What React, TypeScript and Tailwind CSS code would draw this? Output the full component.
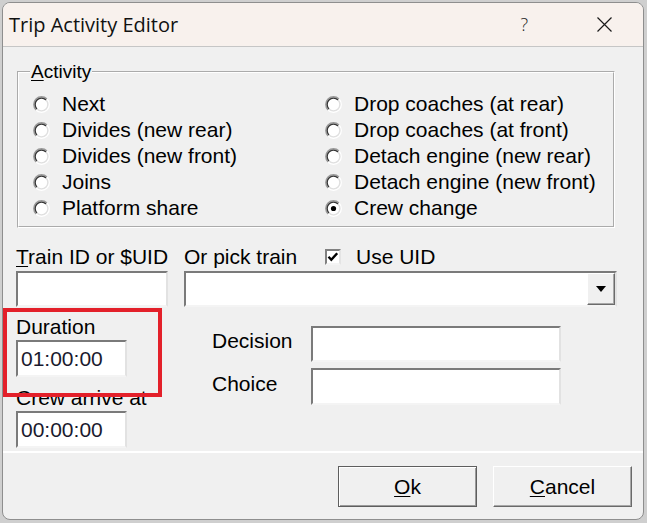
import React from "react";

const body = "font-['Liberation_Sans',Arial,sans-serif] text-[21px] leading-[26px] text-black";

function Radio({ checked = false }: { checked?: boolean }) {
  return (
    <svg width="17" height="17" viewBox="0 0 17 17" className="shrink-0">
      <circle cx="8.5" cy="8.5" r="6.5" fill="#fff" />
      <path d="M3.05 13.95 A7.7 7.7 0 0 1 13.95 3.05" fill="none" stroke="#9a9a9a" strokeWidth="1.4" />
      <path d="M13.95 3.05 A7.7 7.7 0 0 1 3.05 13.95" fill="none" stroke="#ffffff" strokeWidth="1.4" />
      <path d="M4 13 A6.3 6.3 0 0 1 13 4" fill="none" stroke="#383838" strokeWidth="1.4" />
      <path d="M13 4 A6.3 6.3 0 0 1 4 13" fill="none" stroke="#e0e0e0" strokeWidth="1.4" />
      {checked && <circle cx="8.5" cy="8.5" r="2.6" fill="#000" />}
    </svg>
  );
}

function Opt({ label, checked }: { label: string; checked?: boolean }) {
  return (
    <div className="flex h-[26px] items-center gap-[12px]">
      <Radio checked={checked} />
      <span className="whitespace-nowrap">{label}</span>
    </div>
  );
}

const sunken =
  "border-2 border-t-[#7a7a7a] border-l-[#7a7a7a] border-b-[#f4f4f4] border-r-[#e2e2e2] bg-white";

function Field({ w, h, value }: { w: string; h: string; value?: string }) {
  return (
    <div className={`${sunken} ${w} ${h} flex items-center pl-[3px]`}>
      {value && <span className="text-[#1a1a2e]">{value}</span>}
    </div>
  );
}

export default function App() {
  const left = ["Next", "Divides (new rear)", "Divides (new front)", "Joins", "Platform share"];
  const right = [
    "Drop coaches (at rear)",
    "Drop coaches (at front)",
    "Detach engine (new rear)",
    "Detach engine (new front)",
    "Crew change",
  ];

  return (
    <div className="h-[523px] w-[647px] overflow-hidden bg-[#cfcfcf] pl-[2px] pt-[2px]">
      <div className="relative flex h-[518px] w-[642px] flex-col overflow-hidden rounded-[8px] border border-[#8e8e8e] bg-[#f0f0f0]">
        {/* title bar */}
        <div className="flex h-[44px] shrink-0 items-center border-b border-[#c6c6c6] bg-[#f8f1ed] font-['Open_Sans','Noto_Sans',sans-serif] text-[20px] text-[#111]">
          <span className="pl-[6px]">Trip Activity Editor</span>
          <span className="ml-auto text-[18px] font-light text-[#222]">?</span>
          <svg width="15" height="15" viewBox="0 0 15 15" className="ml-[69px] mr-[31px]">
            <path d="M0.5 0.5 L14.5 14.5 M14.5 0.5 L0.5 14.5" stroke="#1a1a1a" strokeWidth="1.2" />
          </svg>
        </div>

        <div className={`${body} flex flex-1 flex-col`}>
          <div className="pl-[13px]">
            <fieldset className="ml-[1px] mt-[14px] w-[598px] border-2 border-white pb-[5px] pl-[11px] pt-[8px] [border-style:groove]">
              <legend className="px-[1px] text-[19px] leading-[22px]">
                <span className="underline decoration-1 underline-offset-2">A</span>ctivity
              </legend>
              <div className="grid grid-cols-[292px_1fr] pl-[3px]">
                <div className="flex flex-col">
                  {left.map((l) => (
                    <Opt key={l} label={l} />
                  ))}
                </div>
                <div className="flex flex-col">
                  {right.map((l) => (
                    <Opt key={l} label={l} checked={l === "Crew change"} />
                  ))}
                </div>
              </div>
            </fieldset>

            <div className="mt-[16px] flex h-[26px] items-center">
              <span className="w-[168px] whitespace-nowrap">
                <span className="underline decoration-1 underline-offset-2">T</span>rain ID or $UID
              </span>
              <span className="w-[141px] whitespace-nowrap">Or pick train</span>
              <div className="flex h-[16px] w-[16px] items-center justify-center border-2 border-t-[#808080] border-l-[#808080] border-b-[#f4f4f4] border-r-[#e4e4e4] bg-white">
                <svg width="12" height="12" viewBox="0 0 12 12">
                  <path d="M1.5 5.8 L4.3 8.8 L10.2 2.2" fill="none" stroke="#000" strokeWidth="2.4" />
                </svg>
              </div>
              <span className="ml-[15px]">Use UID</span>
            </div>

            <div className="mt-[1px] flex">
              <Field w="w-[152px]" h="h-[36px]" />
              <div className={`${sunken} ml-[16px] flex h-[36px] w-[433px] justify-end pr-0`}>
                <div className="flex h-full w-[28px] items-center justify-center border border-t-white border-l-white border-b-[#6b6b6b] border-r-[#6b6b6b] bg-[#f0f0f0] shadow-[inset_-1px_-1px_0_#a8a8a8]">
                  <svg width="10" height="6" viewBox="0 0 10 6">
                    <path d="M0 0 L10 0 L5 6 Z" fill="#000" />
                  </svg>
                </div>
              </div>
            </div>

            <div className="flex">
              <div className="mt-[7px] flex w-[196px] flex-col">
                <span className="h-[26px]">Duration</span>
                <Field w="w-[111px]" h="h-[37px]" value="01:00:00" />
                <span className="mt-[8px] h-[26px]">Crew arrive at</span>
                <Field w="w-[111px]" h="h-[37px]" value="00:00:00" />
              </div>
              <div className="mt-[19px] flex flex-col">
                <div className="flex items-center">
                  <span className="mb-[6px] w-[99px]">Decision</span>
                  <Field w="w-[250px]" h="h-[36px]" />
                </div>
                <div className="mt-[6px] flex items-center">
                  <span className="mb-[6px] w-[99px]">Choice</span>
                  <Field w="w-[250px]" h="h-[37px]" />
                </div>
              </div>
            </div>
          </div>

          <div className="mt-[3px] h-[2px] w-full bg-white" />

          <div className="mt-[13px] flex justify-end gap-[16px] pr-[11px]">
            <button className="flex h-[41px] w-[139px] items-center justify-center border border-[#5e5e5e] bg-[#f0f0f0] shadow-[inset_1px_1px_0_#fff,inset_-1px_-1px_0_#9a9a9a]">
              <span className="underline decoration-1 underline-offset-2">O</span>k
            </button>
            <button className="flex h-[41px] w-[139px] items-center justify-center border border-t-white border-l-white border-b-[#6a6a6a] border-r-[#6a6a6a] bg-[#f0f0f0] shadow-[inset_-1px_-1px_0_#a8a8a8]">
              <span className="underline decoration-1 underline-offset-2">C</span>ancel
            </button>
          </div>
        </div>

        {/* highlight annotation over the Duration field */}
        <div className="pointer-events-none absolute left-0 top-[305px] h-[89px] w-[159px] border-4 border-[#e3202a]" />
      </div>
    </div>
  );
}
